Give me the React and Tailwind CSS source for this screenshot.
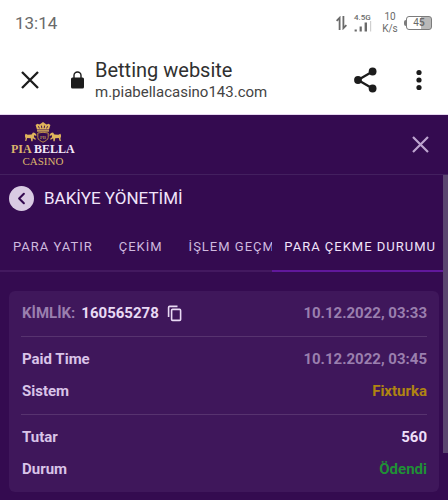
import { ChevronLeft } from 'lucide-react';

const tabs = ['PARA YATIR', 'ÇEKİM', 'İŞLEM GEÇMİŞİ'];

const sections = [
    [
        { label: 'Paid Time', value: '10.12.2022, 03:45', color: 'text-[#9a7fae]' },
        { label: 'Sistem', value: 'Fixturka', color: 'text-[#b08412]' },
    ],
    [
        { label: 'Tutar', value: '560', color: 'text-[#eedff8]' },
        { label: 'Durum', value: 'Ödendi', color: 'text-[#1f9036]' },
    ],
];

function StatusBar() {
    return (
        <div className="flex h-[46px] items-center justify-between pl-[15px] pr-4 text-[#6a6a6a]">
            <span className="text-[17px] leading-5">13:14</span>
            <div className="flex items-center">
                {/* Data arrows */}
                <svg className="mr-[7px]" width="11" height="14" viewBox="0 0 11 14" fill="none" stroke="currentColor" strokeWidth="1.8">
                    <path d="M3.6 14V1.8L0.6 4.8M7.4 0v12.2L10.4 9.2" />
                </svg>
                <div className="flex w-[18px] flex-col">
                    <span className="whitespace-nowrap text-[8px] font-medium leading-[7px]">4.5G</span>
                    <svg width="18" height="11" viewBox="0 0 18 11" fill="currentColor">
                        <path d="M0.6 8.4h2.2v2.2H0.6zM5.6 5.4h2.2v5.2H5.6zM10.6 1.4h2.4v9.2h-2.4z" />
                        <path d="M16 0h1.2v10.6H16z" fill="#cfcfcf" />
                    </svg>
                </div>
                <div className="ml-2.5 flex w-4 flex-col items-center text-[10px] leading-3">
                    <span>10</span>
                    <span>K/s</span>
                </div>
                {/* Battery */}
                <div className="ml-1.5 flex items-center">
                    <span className="h-1.5 w-0.5 rounded-l-sm bg-[#7c7c7c]" />
                    <div className="flex h-[14px] w-[26px] items-center justify-center rounded-[3px] border border-[#7c7c7c] bg-linear-to-r from-white from-60% to-[#b9b9b9] to-60% text-[10px] leading-3">
                        4<span className="font-bold">5</span>
                    </div>
                </div>
            </div>
        </div>
    );
}

function BrowserBar() {
    return (
        <div className="flex h-[69px] items-center border-b border-[#e6d6f0] pl-[21px] pr-[26px] text-[#1c1c1c]">
            <button type="button" aria-label="Close tab">
                <svg width="18" height="18" viewBox="0 0 18 18" fill="none" stroke="currentColor" strokeWidth="2.3">
                    <path d="M1 1l16 16M17 1L1 17" />
                </svg>
            </button>
            <svg className="ml-8" width="13" height="18" viewBox="0 0 13 18">
                <rect x="0" y="6.5" width="13" height="11" rx="1.5" fill="currentColor" />
                <path d="M3 7V4.5a3.5 3.5 0 0 1 7 0V7" fill="none" stroke="currentColor" strokeWidth="1.4" />
            </svg>
            <div className="ml-[11px] min-w-0 flex-1">
                <p className="truncate text-xl leading-6 text-[#303030]">Betting website</p>
                <p className="truncate text-[15px] leading-5 text-[#444444]">m.piabellacasino143.com</p>
            </div>
            <button type="button" aria-label="Share">
                <svg width="23" height="26" viewBox="0 0 23 26" fill="currentColor">
                    <path d="M18.6 4.5L4 13L18.6 21.5" fill="none" stroke="currentColor" strokeWidth="2.3" />
                    <circle cx="18.6" cy="4.5" r="3.9" />
                    <circle cx="4" cy="13" r="3.9" />
                    <circle cx="18.6" cy="21.5" r="3.9" />
                </svg>
            </button>
            <button type="button" aria-label="Menu" className="ml-[39px]">
                <svg width="6" height="22" viewBox="0 0 6 22" fill="currentColor">
                    <circle cx="3" cy="3.5" r="2.6" />
                    <circle cx="3" cy="11" r="2.6" />
                    <circle cx="3" cy="18.5" r="2.6" />
                </svg>
            </button>
        </div>
    );
}

function Horse() {
    return (
        <path d="M1 3.5L2.6 1.6L4.6 1L6 3L10 3.3L12 2.4L12.8 4.5L12 7L12.5 9.5H11.3L10.4 6.6L6.8 6.8L6.3 9.8H5L4.8 6.8L2.4 8.4L1.6 7.6L3.7 5.5L3.3 3.6L1.6 4.6Z" />
    );
}

function Logo() {
    return (
        <a href="#" className="flex flex-col items-center font-['Liberation_Serif',serif] text-[#dcb56c]">
            <svg width="36" height="21" viewBox="0 0 36 21" fill="#dfb45c">
                <path d="M12 7.4L10.6 3L12.4 1.8L14.4 2.6L16 1.4L18 0L20 1.4L21.6 2.6L23.6 1.8L25.4 3L24 7.4Z" />
                <path d="M12 8.2h12v1.4H12z" />
                <path d="M13.4 4.2l1 2.2M16.4 3.6l.4 2.6M19.6 3.6l-.4 2.6M22.6 4.2l-1 2.2" stroke="#340b50" strokeWidth="0.9" />
                <path d="M12.8 11L18 10.3l5.2 0.7v4.4c0 2.3-2.7 3.6-5.2 4.8c-2.5-1.2-5.2-2.5-5.2-4.8z" fill="none" stroke="#b98b45" strokeWidth="1" />
                <text x="18" y="16.5" textAnchor="middle" fontSize="5">PB</text>
                <g transform="translate(12.6 9.4) scale(-1 1)"><Horse /></g>
                <g transform="translate(23.4 9.4)"><Horse /></g>
            </svg>
            <span className="whitespace-nowrap text-xs font-bold leading-3">
                PIA <span className="text-[#f3e8f8]">BELLA</span>
            </span>
            <span className="text-[11px] leading-3">CASINO</span>
        </a>
    );
}

function SiteHeader() {
    return (
        <header className="flex h-[60px] items-center justify-between border-b border-[#43205f] pl-[11px] pr-[19px]">
            <Logo />
            <button type="button" aria-label="Close" className="text-[#bda4cf]">
                <svg width="17" height="17" viewBox="0 0 17 17" fill="none" stroke="currentColor" strokeWidth="2.2">
                    <path d="M1 1l15 15M16 1L1 16" />
                </svg>
            </button>
        </header>
    );
}

function TabBar() {
    return (
        <nav className="flex h-[50px] text-[13px] tracking-[1px]">
            <div className="flex min-w-0 flex-1 overflow-hidden border-b-2 border-[#43195f] text-[#cfb9df]">
                {tabs.map((tab) => (
                    <button key={tab} type="button" className="shrink-0 px-[13px] pt-0.5">
                        {tab}
                    </button>
                ))}
            </div>
            <button type="button" className="shrink-0 border-b-2 border-[#61189c] px-3 pt-0.5 text-[#f1e4fa]">
                PARA ÇEKME DURUMU
            </button>
        </nav>
    );
}

function TransactionCard() {
    return (
        <div className="mx-[9px] mt-[19px] rounded-md bg-[#3f175b] px-3 text-[15px] font-bold">
            <div className="flex items-center justify-between border-b border-[#57336f] pb-[7px] pt-1.5">
                <div className="flex h-8 items-center pl-px">
                    <span className="text-[#9a7fae]">KİMLİK:</span>
                    <span className="ml-1.5 text-[#e9daf4]">160565278</span>
                    <button type="button" aria-label="Copy" className="ml-2 text-[#e9daf4]">
                        <svg width="15" height="17" viewBox="0 0 15 17" fill="none" stroke="currentColor" strokeWidth="1.6">
                            <path d="M1.6 12V2.4Q1.6 1.4 2.6 1.4H10.5" />
                            <rect x="4.6" y="4.4" width="9" height="11" rx="1" />
                        </svg>
                    </button>
                </div>
                <span className="text-[#9a7fae]">10.12.2022, 03:33</span>
            </div>
            {sections.map((rows, i) => (
                <dl key={i} className="border-b border-[#57336f] pb-[7px] pt-1.5 last:border-0">
                    {rows.map((row) => (
                        <div key={row.label} className="flex h-8 items-center justify-between pl-px">
                            <dt className="text-[#d9c4e8]">{row.label}</dt>
                            <dd className={row.color}>{row.value}</dd>
                        </div>
                    ))}
                </dl>
            ))}
        </div>
    );
}

export default function App() {
    return (
        <div className="flex min-h-screen flex-col bg-white font-[Roboto,sans-serif]">
            <StatusBar />
            <BrowserBar />
            <div className="flex flex-1 flex-col bg-[#340b50]">
                <SiteHeader />
                <main className="relative flex-1 pb-2">
                    <div className="flex h-[47px] items-center pl-[9px]">
                        <button type="button" aria-label="Back" className="flex size-[25px] items-center justify-center rounded-full bg-[#d9cbe3] text-[#340b50]">
                            <ChevronLeft size={19} strokeWidth={2.6} />
                        </button>
                        <h1 className="ml-2.5 text-[17px] text-[#f1e4fa]">BAKİYE YÖNETİMİ</h1>
                    </div>
                    <TabBar />
                    <TransactionCard />
                    {/* Scroll thumb */}
                    <div className="absolute right-0 top-0 h-[278px] w-[5px] bg-[#5b4570]" />
                </main>
            </div>
        </div>
    );
}
